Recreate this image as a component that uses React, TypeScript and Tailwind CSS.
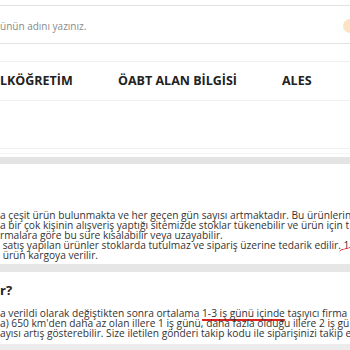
export default function App() {
  const font = { fontFamily: '"Open Sans", "DejaVu Sans", sans-serif' };
  return (
    <div className="w-[350px] h-[350px] overflow-hidden bg-white flex flex-col text-[#333]" style={font}>
      {/* search */}
      <div className="h-[5px] shrink-0" />
      <div className="h-[39px] shrink-0 border-y border-[#e2e2e2] flex items-center justify-between pt-[3px]">
        <span className="text-[10px] text-[#8a8a8a] whitespace-nowrap">ünün adını yazınız.</span>
        <span className="w-[10px] h-[14px] rounded-l-full bg-[#fbe3c4] mr-[-3px]" />
      </div>
      <div className="h-[17px] shrink-0" />

      {/* nav */}
      <div className="h-[40px] shrink-0 border-y border-[#f0f0f0] flex items-center text-[12.5px] font-bold text-[#222] whitespace-nowrap">
        <span className="w-[118px]">LKÖĞRETİM</span>
        <span className="w-[164px]">ÖABT ALAN BİLGİSİ</span>
        <span>ALES</span>
      </div>

      <div className="h-[47px] shrink-0" />
      <div className="h-[1px] shrink-0 bg-[#f1f1f1]" />
      <div className="h-[4px] shrink-0" />
      <div className="h-[1px] shrink-0 bg-[#f4f4f4]" />
      <div className="h-[3px] shrink-0" />
      <div className="h-[7px] shrink-0 bg-[#e4e4e4]" />

      {/* answer 1 */}
      <div className="h-[46px] shrink-0" />
      <div className="text-[10.2px] leading-[10px] whitespace-nowrap">
        <p>a çeşit ürün bulunmakta ve her geçen gün sayısı artmaktadır. Bu ürünlerin</p>
        <p>a bir çok kişinin alışveriş yaptığı sitemizde stoklar tükenebilir ve ürün için t</p>
        <p>rmalara göre bu süre kısalabilir veya uzayabilir.</p>
        <p className="relative">
          &nbsp;satış yapılan ürünler stoklarda tutulmaz ve sipariş üzerine tedarik edilir. 1
          <span className="absolute left-[339px] top-[8px] w-[14px] h-[4px] border-t-[1.5px] border-[#d22] rounded-tl-[8px] rotate-[-14deg]" />
        </p>
        <p>&nbsp;ürün kargoya verilir.</p>
      </div>

      <div className="h-[4px] shrink-0" />
      <div className="h-[8px] shrink-0 bg-[#e6e6e6]" />

      {/* question 2 */}
      <div className="h-[10px] shrink-0" />
      <h3 className="text-[13px] leading-[16px] font-bold text-[#222]">r?</h3>
      <div className="h-[10px] shrink-0" />
      <div className="text-[10.2px] leading-[10px] whitespace-nowrap">
        <p>
          a verildi olarak değiştikten sonra ortalama{' '}
          <span className="underline decoration-[#d22] decoration-[1.5px] underline-offset-[2px]">1-3 iş günü içinde</span>{' '}
          taşıyıcı firma t
        </p>
        <p>a) 650 km'den daha az olan illere 1 iş günü, daha fazla olduğu illere 2 iş gü</p>
        <p>ayısı artış gösterebilir. Size iletilen gönderi takip kodu ile siparişinizi takip e</p>
      </div>
      <div className="h-[6px] shrink-0" />
      <div className="flex-1 bg-[#ececec]" />
    </div>
  );
}
